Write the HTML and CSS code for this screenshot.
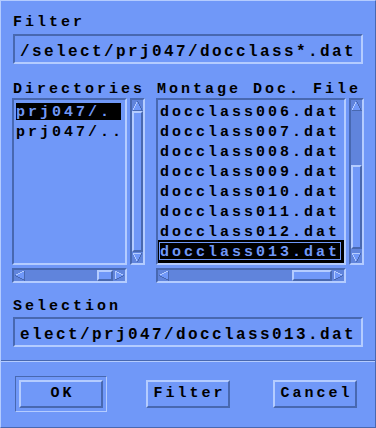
FILE: index.html
```html
<!DOCTYPE html>
<html>
<head>
<meta charset="utf-8">
<link rel="stylesheet" href="styles.css">
</head>
<body>
<div class="dialog">
  <div class="content">
    <div class="label">Filter</div>
    <div class="field">/select/prj047/docclass*.dat</div>
    <div class="panes">
      <div class="pane pane-dirs">
        <div class="label label-pane">Directories</div>
        <div class="scrolled">
          <div class="list list-dirs">
            <div class="row sel">prj047/.</div>
            <div class="row">prj047/..</div>
          </div>
          <div class="vscroll">
            <svg class="arrow" viewBox="0 0 11 11" width="11" height="11"><polygon class="a-fill" points="5.5,1 1,10 10,10"/><path class="a-lt" d="M1,10 L5.5,1"/><path class="a-dk" d="M5.5,1 L10,10 L1,10"/></svg>
            <div class="track track-v">
              <div class="thumb" style="height:141px"></div>
            </div>
            <svg class="arrow" viewBox="0 0 11 11" width="11" height="11"><polygon class="a-fill" points="1,1 10,1 5.5,10"/><path class="a-lt" d="M5.5,10 L1,1 L10,1"/><path class="a-dk" d="M10,1 L5.5,10"/></svg>
          </div>
          <div class="hscroll">
            <svg class="arrow" viewBox="0 0 11 11" width="11" height="11"><polygon class="a-fill" points="1,5.5 10,1 10,10"/><path class="a-lt" d="M1,5.5 L10,1"/><path class="a-dk" d="M10,1 L10,10 L1,5.5"/></svg>
            <div class="track track-h">
              <div class="gap-h" style="width:72px"></div>
              <div class="thumb" style="width:16px"></div>
            </div>
            <svg class="arrow" viewBox="0 0 11 11" width="11" height="11"><polygon class="a-fill" points="1,1 10,5.5 1,10"/><path class="a-lt" d="M1,10 L1,1 L10,5.5"/><path class="a-dk" d="M10,5.5 L1,10"/></svg>
          </div>
        </div>
      </div>
      <div class="pane pane-files">
        <div class="label label-pane">Montage Doc. File</div>
        <div class="scrolled">
          <div class="list list-files">
            <div class="row">docclass006.dat</div>
            <div class="row">docclass007.dat</div>
            <div class="row">docclass008.dat</div>
            <div class="row">docclass009.dat</div>
            <div class="row">docclass010.dat</div>
            <div class="row">docclass011.dat</div>
            <div class="row">docclass012.dat</div>
            <div class="row focus">docclass013.dat</div>
          </div>
          <div class="vscroll">
            <svg class="arrow" viewBox="0 0 11 11" width="11" height="11"><polygon class="a-fill" points="5.5,1 1,10 10,10"/><path class="a-lt" d="M1,10 L5.5,1"/><path class="a-dk" d="M5.5,1 L10,10 L1,10"/></svg>
            <div class="track track-v">
              <div class="gap-v" style="height:54px"></div>
              <div class="thumb" style="height:84px"></div>
            </div>
            <svg class="arrow" viewBox="0 0 11 11" width="11" height="11"><polygon class="a-fill" points="1,1 10,1 5.5,10"/><path class="a-lt" d="M5.5,10 L1,1 L10,1"/><path class="a-dk" d="M10,1 L5.5,10"/></svg>
          </div>
          <div class="hscroll">
            <svg class="arrow" viewBox="0 0 11 11" width="11" height="11"><polygon class="a-fill" points="1,5.5 10,1 10,10"/><path class="a-lt" d="M1,5.5 L10,1"/><path class="a-dk" d="M10,1 L10,10 L1,5.5"/></svg>
            <div class="track track-h">
              <div class="gap-h" style="width:123px"></div>
              <div class="thumb" style="width:40px"></div>
            </div>
            <svg class="arrow" viewBox="0 0 11 11" width="11" height="11"><polygon class="a-fill" points="1,1 10,5.5 1,10"/><path class="a-lt" d="M1,10 L1,1 L10,5.5"/><path class="a-dk" d="M10,5.5 L1,10"/></svg>
          </div>
        </div>
      </div>
    </div>
    <div class="label label-sel">Selection</div>
    <div class="field field-sel">elect/prj047/docclass013.dat</div>
  </div>
  <div class="separator"></div>
  <div class="buttons">
    <div class="slot default"><div class="btn">OK</div></div>
    <div class="slot"><div class="btn">Filter</div></div>
    <div class="slot"><div class="btn">Cancel</div></div>
  </div>
</div>
</body>
</html>
```
FILE: styles.css
```css
:root {
  --bg: #7098f8;
  --light: #b4ccff;
  --dark: #4868b0;
  --trough: #6084dc;
}

html, body {
  margin: 0;
  padding: 0;
  background: var(--bg);
}

.dialog {
  width: 376px;
  height: 428px;
  box-sizing: border-box;
  border-style: solid;
  border-width: 1px;
  border-color: var(--light) var(--dark) var(--dark) var(--light);
  background: var(--bg);
  font-family: "Liberation Mono", "DejaVu Sans Mono", monospace;
  font-weight: bold;
  font-size: 15px;
  letter-spacing: 3px;
  color: #000;
  display: flex;
  flex-direction: column;
  overflow: hidden;
}

.content {
  padding: 13px 11px 13px 11px;
}

.label {
  height: 17px;
  line-height: 17px;
  padding-left: 1px;
  white-space: nowrap;
}

.field {
  margin: 3px 1px 0 1px;
  height: 30px;
  box-sizing: border-box;
  border-style: solid;
  border-width: 2px;
  border-color: var(--dark) var(--light) var(--light) var(--dark);
  padding: 6px 0 0 5px;
  font-size: 16px;
  letter-spacing: 2.4px;
  line-height: 20px;
  white-space: nowrap;
  overflow: hidden;
}

.field-sel {
  margin-top: 2px;
}

.label-sel {
  margin-top: 15px;
}

.panes {
  display: flex;
  gap: 11px;
  margin-top: 17px;
}

.pane-dirs {
  width: 133px;
}

.pane-files {
  width: 208px;
}

.scrolled {
  display: grid;
  grid-template-columns: 1fr 15px;
  grid-template-rows: 167px 15px;
  gap: 3px;
}

.list {
  grid-row: 1;
  grid-column: 1;
  border-style: solid;
  border-width: 2px;
  border-color: var(--dark) var(--light) var(--light) var(--dark);
  overflow: hidden;
}

.row {
  height: 17px;
  line-height: 20px;
  margin-top: 3px;
  white-space: nowrap;
}

.list-dirs .row {
  margin-left: 2px;
  margin-right: 4px;
}

.list-files .row {
  padding-left: 2px;
}

.row.sel {
  background: #000;
  color: var(--bg);
}

.row.focus {
  position: relative;
  height: 23px;
  box-sizing: border-box;
  margin-top: 0;
  padding-top: 3px;
  background: #000;
  color: var(--bg);
}

.row.focus::after {
  content: "";
  position: absolute;
  top: 2px;
  left: 1px;
  right: 3px;
  bottom: 3px;
  border: 1px solid var(--bg);
}

.vscroll {
  grid-row: 1;
  grid-column: 2;
  border-style: solid;
  border-width: 2px;
  border-color: var(--dark) var(--light) var(--light) var(--dark);
  background: var(--trough);
  display: flex;
  flex-direction: column;
}

.hscroll {
  grid-row: 2;
  grid-column: 1;
  border-style: solid;
  border-width: 2px;
  border-color: var(--dark) var(--light) var(--light) var(--dark);
  background: var(--trough);
  display: flex;
}

.arrow {
  display: block;
  flex: none;
  shape-rendering: crispEdges;
}

.a-fill {
  fill: var(--bg);
}

.a-lt {
  fill: none;
  stroke: var(--light);
  stroke-width: 1;
}

.a-dk {
  fill: none;
  stroke: var(--dark);
  stroke-width: 1;
}

.track {
  flex: 1;
  display: flex;
}

.track-v {
  flex-direction: column;
}

.gap-v, .gap-h {
  flex: none;
}

.thumb {
  flex: none;
  box-sizing: border-box;
  background: var(--bg);
  border-style: solid;
  border-width: 2px;
  border-color: var(--light) var(--dark) var(--dark) var(--light);
}

.track-h .thumb {
  height: 100%;
}

.separator {
  border-top: 1px solid var(--dark);
  border-bottom: 1px solid var(--light);
}

.buttons {
  display: flex;
  gap: 35px;
  padding: 14px 0 15px 14px;
}

.slot {
  width: 92px;
  height: 36px;
  box-sizing: border-box;
  padding: 4px;
}

.slot.default {
  border-style: solid;
  border-width: 1px;
  border-color: var(--dark) var(--light) var(--light) var(--dark);
  padding: 3px;
}

.btn {
  width: 84px;
  height: 28px;
  box-sizing: border-box;
  border-style: solid;
  border-width: 2px;
  border-color: var(--light) var(--dark) var(--dark) var(--light);
  text-align: center;
  line-height: 24px;
  padding-left: 3px;
  white-space: nowrap;
}
```
